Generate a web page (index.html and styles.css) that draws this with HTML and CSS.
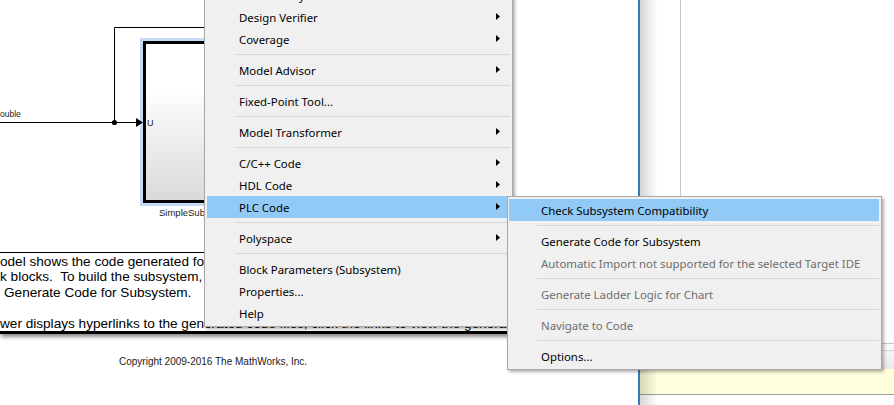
FILE: index.html
```html
<!DOCTYPE html>
<html>
<head>
<meta charset="utf-8">
<link rel="stylesheet" href="styles.css">
</head>
<body>
<div class="screen">
  <div class="canvas">
    <svg class="diagram" width="638" height="405" viewBox="0 0 638 405">
      <defs>
        <linearGradient id="blockfill" x1="0" y1="0" x2="0" y2="1">
          <stop offset="0" stop-color="#ffffff"/>
          <stop offset="0.28" stop-color="#ffffff"/>
          <stop offset="1" stop-color="#d9d9d9"/>
        </linearGradient>
      </defs>
      <text class="sig-label" x="0" y="117">ouble</text>
      <polyline points="114.5,122.5 114.5,27.5 260,27.5" fill="none" stroke="#000" stroke-width="1"/>
      <line x1="0" y1="122.5" x2="137" y2="122.5" stroke="#000" stroke-width="1"/>
      <circle cx="114.5" cy="122.5" r="2.6" fill="#000"/>
      <rect x="141.5" y="39.5" width="200" height="165" fill="none" stroke="#c3dbf4" stroke-width="3"/>
      <rect x="144.5" y="42.5" width="200" height="159" fill="url(#blockfill)" stroke="#000" stroke-width="3"/>
      <polygon points="136,118 143,122.5 136,127" fill="#000"/>
      <text class="port-label" x="147" y="126">U</text>
      <text class="block-label" x="159" y="216">SimpleSubsystem</text>
    </svg>
    <div class="note-box">
      <div class="note-line">odel shows the code generated for the PLC Coder subsystem</div>
      <div class="note-line">k blocks.&nbsp; To build the subsystem, right-click the subsystem</div>
      <div class="note-line indent">Generate Code for Subsystem.</div>
      <div class="note-line">&nbsp;</div>
      <div class="note-line">wer displays hyperlinks to the generated code files, click the links to view the generated code.</div>
    </div>
    <div class="copyright">Copyright 2009-2016 The MathWorks, Inc.</div>
  </div>
  <div class="divider"></div>
  <div class="panel">
    <div class="panel-top"><div class="panel-gap"></div><div class="panel-vline"></div></div>
    <div class="strip-a"></div>
    <div class="strip-b"></div>
    <div class="panel-note"></div>
    <div class="panel-bottom"></div>
  </div>

  <div class="menu main-menu">
    <div class="mi">Linear Analysis<svg class="arrow" width="4" height="7" viewBox="0 0 4 7"><path d="M0 0L4 3.5L0 7Z"/></svg></div>
    <div class="mi">Design Verifier<svg class="arrow" width="4" height="7" viewBox="0 0 4 7"><path d="M0 0L4 3.5L0 7Z"/></svg></div>
    <div class="mi">Coverage<svg class="arrow" width="4" height="7" viewBox="0 0 4 7"><path d="M0 0L4 3.5L0 7Z"/></svg></div>
    <div class="sep"></div>
    <div class="mi">Model Advisor<svg class="arrow" width="4" height="7" viewBox="0 0 4 7"><path d="M0 0L4 3.5L0 7Z"/></svg></div>
    <div class="sep"></div>
    <div class="mi">Fixed-Point Tool...</div>
    <div class="sep"></div>
    <div class="mi">Model Transformer<svg class="arrow" width="4" height="7" viewBox="0 0 4 7"><path d="M0 0L4 3.5L0 7Z"/></svg></div>
    <div class="sep"></div>
    <div class="mi">C/C++ Code<svg class="arrow" width="4" height="7" viewBox="0 0 4 7"><path d="M0 0L4 3.5L0 7Z"/></svg></div>
    <div class="mi">HDL Code<svg class="arrow" width="4" height="7" viewBox="0 0 4 7"><path d="M0 0L4 3.5L0 7Z"/></svg></div>
    <div class="mi active">PLC Code<svg class="arrow" width="4" height="7" viewBox="0 0 4 7"><path d="M0 0L4 3.5L0 7Z"/></svg></div>
    <div class="sep"></div>
    <div class="mi">Polyspace<svg class="arrow" width="4" height="7" viewBox="0 0 4 7"><path d="M0 0L4 3.5L0 7Z"/></svg></div>
    <div class="sep"></div>
    <div class="mi">Block Parameters (Subsystem)</div>
    <div class="mi">Properties...</div>
    <div class="mi">Help</div>
  </div>

  <div class="menu sub-menu">
    <div class="mi active">Check Subsystem Compatibility</div>
    <div class="sep"></div>
    <div class="mi">Generate Code for Subsystem</div>
    <div class="mi disabled">Automatic Import not supported for the selected Target IDE</div>
    <div class="sep"></div>
    <div class="mi disabled">Generate Ladder Logic for Chart</div>
    <div class="sep"></div>
    <div class="mi disabled">Navigate to Code</div>
    <div class="sep"></div>
    <div class="mi">Options...</div>
  </div>
</div>
</body>
</html>
```
FILE: styles.css
```css
html, body {
  margin: 0;
  padding: 0;
  width: 894px;
  height: 405px;
  overflow: hidden;
  background: #ffffff;
}

.screen {
  position: relative;
  display: flex;
  width: 894px;
  height: 405px;
  overflow: hidden;
}

/* ---------- diagram canvas ---------- */
.canvas {
  position: relative;
  flex: none;
  width: 638px;
  height: 405px;
  background: #ffffff;
  overflow: hidden;
}

.diagram {
  position: absolute;
  left: 0;
  top: 0;
}

.sig-label,
.port-label,
.block-label {
  font-family: "Liberation Sans", Arial, sans-serif;
  fill: #1a1a1a;
}
.sig-label { font-size: 8.5px; }
.port-label { font-size: 9px; }
.block-label { font-size: 9.5px; }

.note-box {
  position: absolute;
  left: 0;
  top: 252px;
  width: 560px;
  padding-top: 1px;
  border-top: 1px solid #000;
  border-bottom: 3px solid #000;
  box-shadow: 0 4px 4px -1px rgba(0, 0, 0, 0.45);
  background: #fff;
  font-family: "Liberation Sans", Arial, sans-serif;
  font-size: 13.6px;
  line-height: 15.4px;
  color: #000;
  white-space: nowrap;
  overflow: hidden;
}

.note-line.indent {
  padding-left: 4px;
}

.copyright {
  position: absolute;
  left: 119px;
  top: 356px;
  font-family: "Liberation Sans", Arial, sans-serif;
  font-size: 10px;
  line-height: 11.5px;
  color: #1a1a1a;
  white-space: nowrap;
}

/* ---------- right panel ---------- */
.divider {
  flex: none;
  width: 2px;
  background: #3a78b8;
}

.panel {
  position: relative;
  flex: 1;
  display: flex;
  flex-direction: column;
  background: #ffffff;
}

.panel::before {
  content: "";
  position: absolute;
  left: 0;
  top: 0;
  bottom: 0;
  width: 18px;
  background: linear-gradient(to right, rgba(0, 0, 0, 0.16), rgba(0, 0, 0, 0));
  pointer-events: none;
}

.panel-top {
  display: flex;
  height: 343px;
  flex: none;
}
.panel-gap { width: 40px; flex: none; }
.panel-vline { width: 1px; flex: none; background: #c8c8c8; }

.strip-a {
  flex: none;
  height: 6px;
  border-top: 1px solid #c4c4c4;
  border-bottom: 1px solid #d2d2d2;
  background: #f8f8f8;
}
.strip-b {
  flex: none;
  height: 18px;
  background: linear-gradient(#f6f6f6, #e9e9e9);
}
.panel-note {
  flex: none;
  height: 25px;
  background: #ffffdd;
  border-bottom: 1px solid #a0a0a0;
}
.panel-bottom {
  flex: 1;
}

/* ---------- context menus ---------- */
.menu {
  position: absolute;
  background: #f0f0f0;
  border: 1px solid #a8a8a8;
  box-shadow: 2px 2px 3px rgba(0, 0, 0, 0.3);
  font-family: "Noto Sans", "Open Sans", sans-serif;
  font-size: 11.4px;
  color: #000;
}

.main-menu {
  left: 204px;
  top: -19px;
  width: 303px;
  padding: 2px 2px 2px 2px;
}

.sub-menu {
  left: 507px;
  top: 196px;
  width: 370px;
  padding: 2px 2px 2px 1px;
}

.mi {
  position: relative;
  height: 22px;
  line-height: 24px;
  padding-left: 32px;
  white-space: nowrap;
}

.mi.active {
  background: #91c9f7;
}

.mi.disabled {
  color: #6d6d6d;
}

.arrow {
  position: absolute;
  right: 10px;
  top: 7px;
  fill: #000;
}

.sep {
  height: 9px;
  position: relative;
}
.sep::after {
  content: "";
  position: absolute;
  left: 28px;
  right: 0;
  top: 4px;
  height: 1px;
  background: #d7d7d7;
}
```
